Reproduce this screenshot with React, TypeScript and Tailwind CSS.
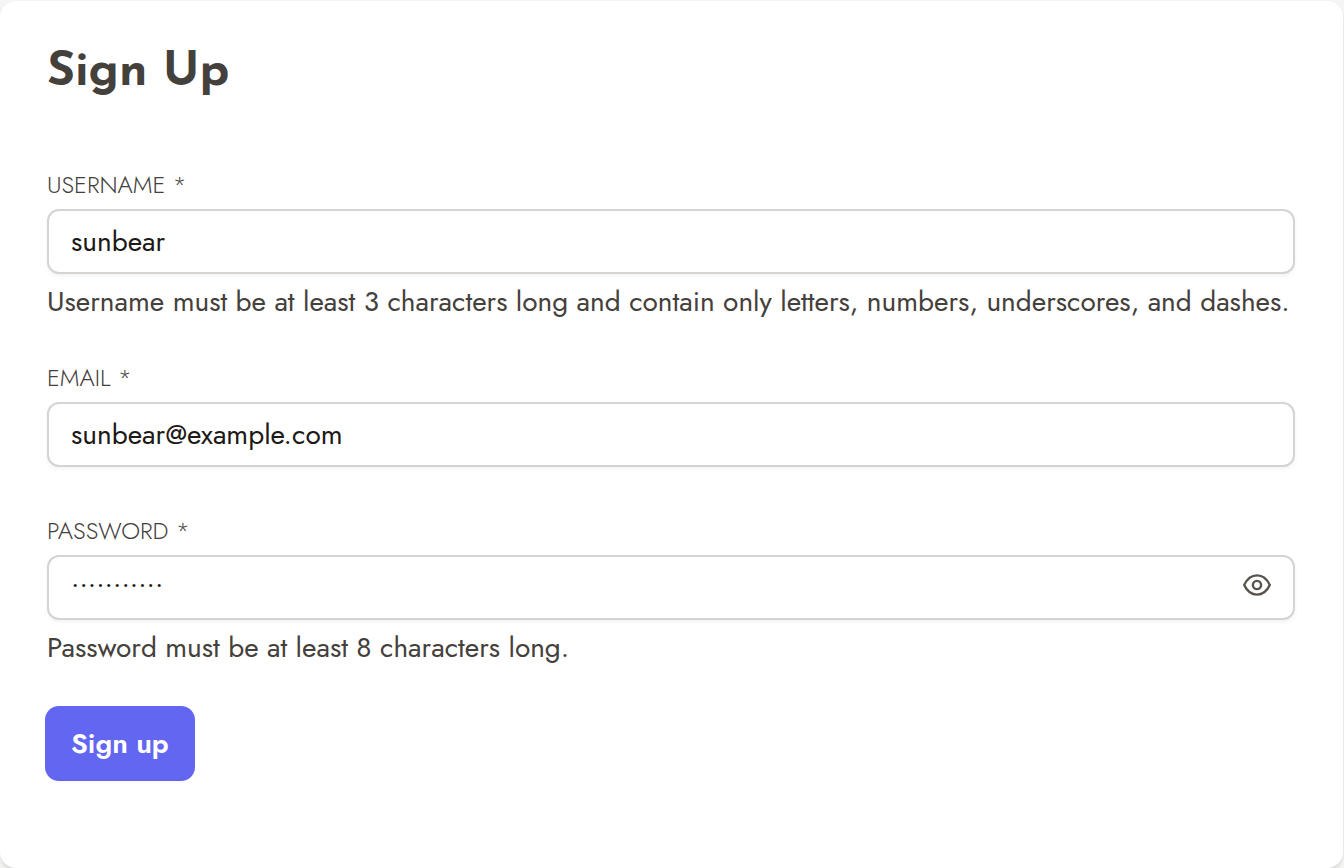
import { useState } from "react";
import type { ReactNode } from "react";

const inputClass =
  "block h-[65px] w-full rounded-xl border-2 border-[#d6d3d1] bg-white px-[22px] text-[28px] text-[#1c1917] shadow-[0_2px_4px_rgba(0,0,0,0.05)] outline-none focus:border-[#6366f1]";

type FieldProps = {
  id: string;
  label: string;
  hint?: string;
  children: ReactNode;
};

function Field({ id, label, hint, children }: FieldProps) {
  return (
    <div>
      <label htmlFor={id} className="mb-2 block text-2xl leading-8 font-light uppercase">
        {label} *
      </label>
      {children}
      {hint && (
        <p id={`${id}-hint`} className="mt-2 text-[28px] leading-10">
          {hint}
        </p>
      )}
    </div>
  );
}

function EyeIcon() {
  return (
    <svg viewBox="0 0 32 32" className="size-8" fill="none" stroke="#57534e" strokeWidth="2.4" strokeLinejoin="round" aria-hidden="true">
      <path d="M3.2 16C6 10 10.5 6.4 16 6.4S26 10 28.8 16C26 22 21.5 25.6 16 25.6S6 22 3.2 16Z" />
      <circle cx="16" cy="16" r="4.1" />
    </svg>
  );
}

export default function App() {
  const [visible, setVisible] = useState(false);

  return (
    <div className="min-h-screen bg-[#f5f5f4] pt-px pr-px font-['Jost','Lato',sans-serif] text-[#44403c]">
      <main className="min-h-[867px] rounded-2xl bg-white pt-10 pr-12 pb-20 pl-[47px] shadow-md">
        <h1 className="font-['Josefin_Sans','Jost','Lato',sans-serif] text-5xl leading-[64px] font-bold">Sign Up</h1>
        <form className="mt-16" onSubmit={(e) => e.preventDefault()}>
          <Field
            id="username"
            label="Username"
            hint="Username must be at least 3 characters long and contain only letters, numbers, underscores, and dashes."
          >
            <input
              id="username"
              type="text"
              defaultValue="sunbear"
              aria-describedby="username-hint"
              className={inputClass}
            />
          </Field>
          <div className="mt-10">
            <Field id="email" label="Email">
              <input id="email" type="email" defaultValue="sunbear@example.com" className={inputClass} />
            </Field>
          </div>
          <div className="mt-12">
            <Field id="password" label="Password" hint="Password must be at least 8 characters long.">
              <div className="relative">
                <input
                  id="password"
                  type={visible ? "text" : "password"}
                  defaultValue="sunbear1234"
                  aria-describedby="password-hint"
                  className={`${inputClass} pr-16`}
                />
                <button
                  type="button"
                  aria-label={visible ? "Hide password" : "Show password"}
                  onClick={() => setVisible(!visible)}
                  className="absolute inset-y-0 right-[22px] flex items-center pb-1.5"
                >
                  <EyeIcon />
                </button>
              </div>
            </Field>
          </div>
          <button
            type="submit"
            className="mt-10 h-[71px] rounded-xl bg-[#6366f1] px-6 text-[28px] font-semibold text-white shadow-[0_2px_4px_rgba(0,0,0,0.05)] ring-2 ring-[#6366f1]"
          >
            Sign up
          </button>
        </form>
      </main>
    </div>
  );
}
